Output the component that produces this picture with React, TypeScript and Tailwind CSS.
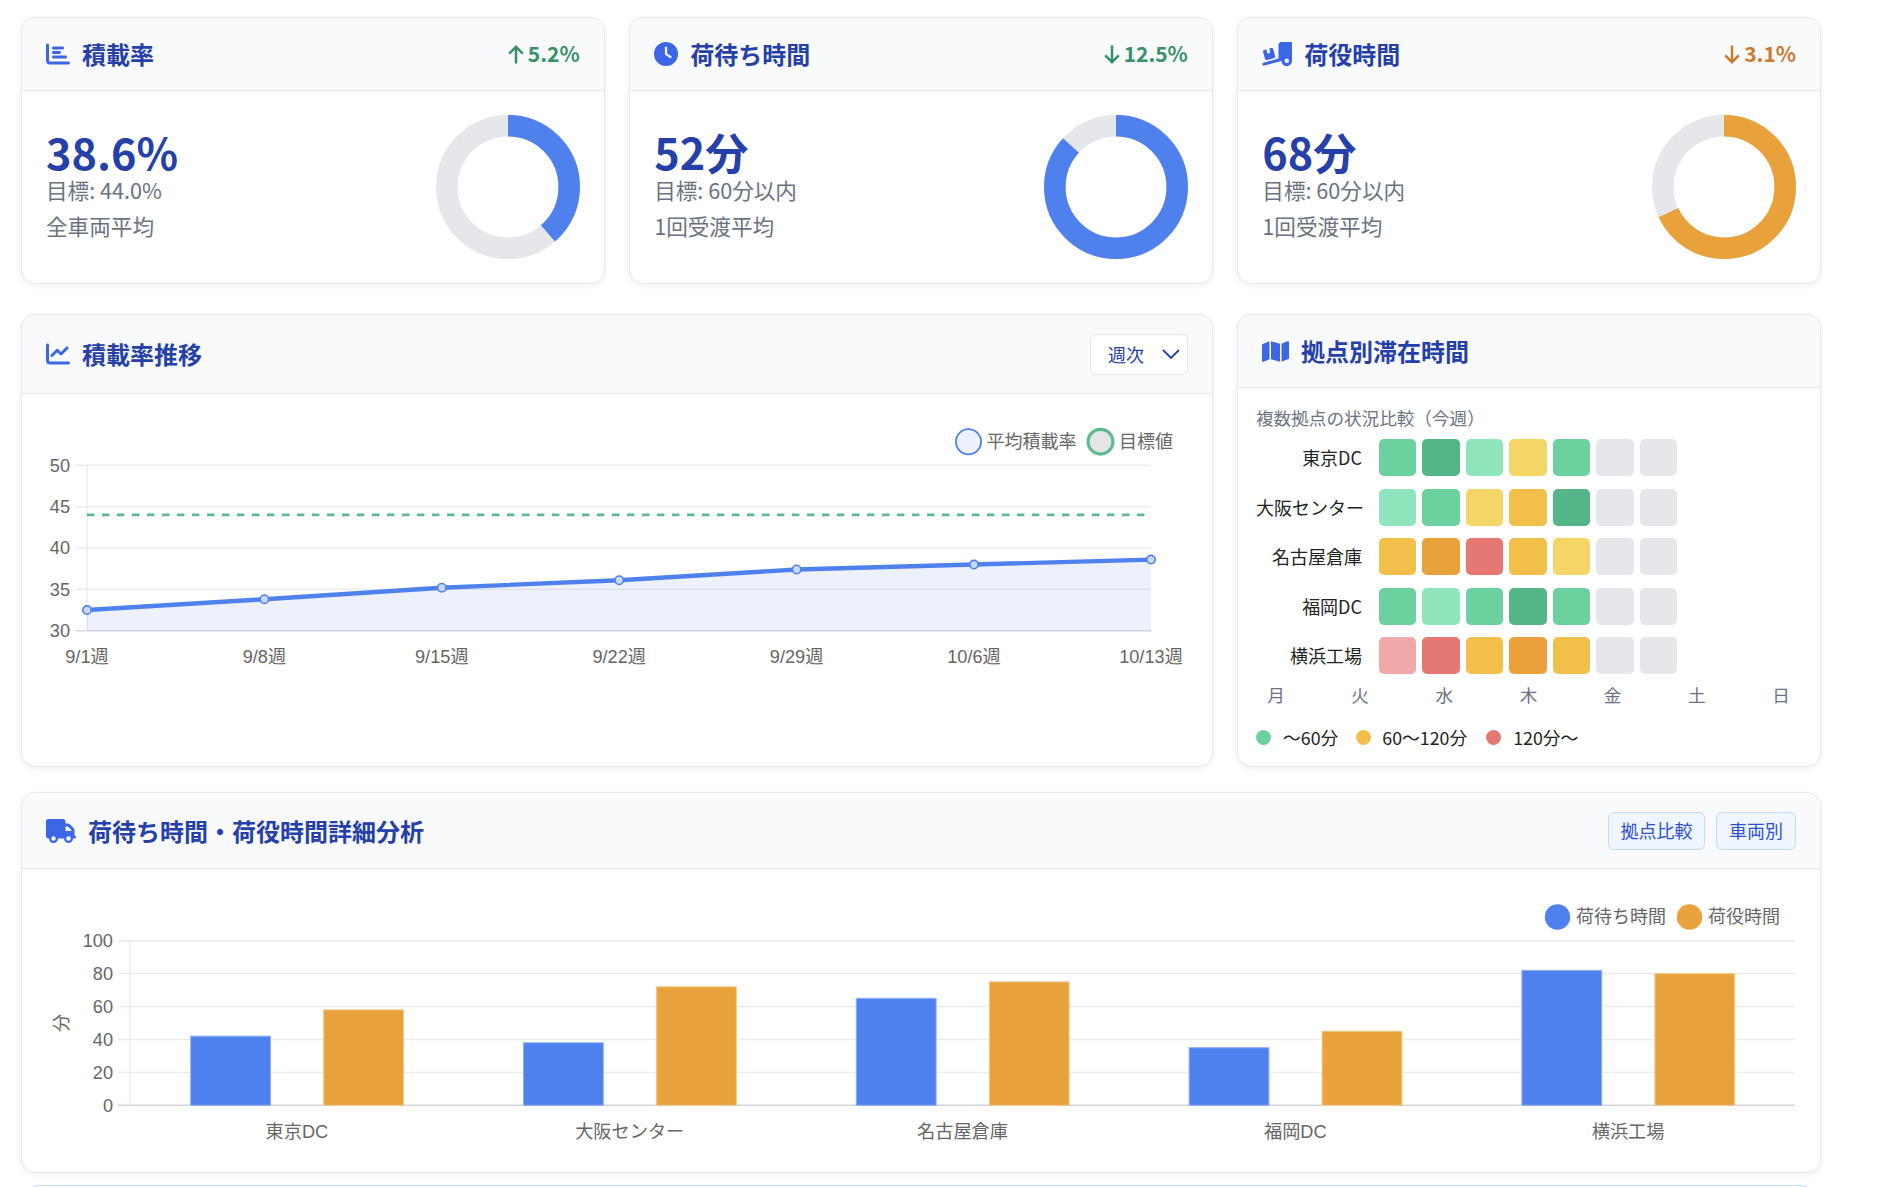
import React from "react";
import { FaChartBar, FaClock, FaTruckRampBox, FaChartLine, FaMap, FaTruck } from "react-icons/fa6";

const BLUE = "#4f81ee";
const ORANGE = "#e8a13b";
const SANS = "Liberation Sans, Noto Sans CJK JP, sans-serif";

function Arrow({ up }: { up: boolean }) {
  return (
    <svg width="16" height="19" viewBox="0 0 16 19" fill="none" stroke="currentColor" strokeWidth="2.5" className="shrink-0">
      {up ? <path d="M8 18.5V2M1.2 8.6 8 1.8l6.8 6.8" /> : <path d="M8 .5V17M1.2 10.4 8 17.2l6.8-6.8" />}
    </svg>
  );
}

function Donut({ pct, color }: { pct: number; color: string }) {
  const r = 61.2;
  const c = 2 * Math.PI * r;
  return (
    <svg width="144" height="144" viewBox="0 0 144 144" className="shrink-0">
      <circle cx="72" cy="72" r={r} fill="none" stroke="#e5e7eb" strokeWidth="21.6" />
      <circle
        cx="72"
        cy="72"
        r={r}
        fill="none"
        stroke={color}
        strokeWidth="21.6"
        strokeDasharray={`${(c * pct) / 100} ${c}`}
        transform="rotate(-90 72 72)"
      />
    </svg>
  );
}

function KpiCard({
  icon,
  title,
  trend,
  trendUp,
  trendColor,
  value,
  target,
  sub,
  pct,
  color,
}: {
  icon: React.ReactNode;
  title: string;
  trend: string;
  trendUp: boolean;
  trendColor: string;
  value: string;
  target: string;
  sub: string;
  pct: number;
  color: string;
}) {
  return (
    <div className="flex-1 h-[267px] bg-white border border-[#e5e7eb] rounded-[14px] shadow-[0_2px_7px_rgba(0,0,0,0.06)] overflow-hidden flex flex-col">
      <div className="h-[73px] shrink-0 px-6 flex items-center justify-between bg-[#f9fafc] border-b border-[#e5e7eb]">
        <div className="flex items-center gap-3 text-[24px] font-bold text-[#2540a8]">
          {icon}
          {title}
        </div>
        <div className="flex items-center gap-[4px] text-[21px] font-semibold" style={{ color: trendColor }}>
          <Arrow up={trendUp} />
          {trend}
        </div>
      </div>
      <div className="flex-1 px-6 flex items-center justify-between">
        <div className="flex flex-col text-[#6b7280] pb-[5.6px]">
          <div className="text-[43.2px] leading-[43px] font-bold text-[#2540a8]">{value}</div>
          <div className="text-[21.6px] leading-[26px] mt-[3.6px]">{target}</div>
          <div className="text-[21.6px] leading-[26px] mt-[10px]">{sub}</div>
        </div>
        <Donut pct={pct} color={color} />
      </div>
    </div>
  );
}

const H2 = "flex items-center gap-3 text-[24px] font-bold text-[#2540a8]";

function LineChart() {
  const xs = [87, 264.4, 441.8, 619.2, 796.6, 974, 1151];
  const vals = [32.5, 33.8, 35.2, 36.1, 37.4, 38, 38.6];
  const labels = ["9/1週", "9/8週", "9/15週", "9/22週", "9/29週", "10/6週", "10/13週"];
  const y = (v: number) => 630.7 - ((v - 30) / 20) * 165.4;
  const off = (v: number) => v - 394;
  const pts = xs.map((x, i) => `${x - 22},${off(y(vals[i]))}`);
  return (
    <svg width="1190" height="372" viewBox="0 0 1190 372" className="block" style={{ fontFamily: SANS }}>
      {[50, 45, 40, 35, 30].map((t) => (
        <g key={t}>
          <line x1="53.5" x2="1129" y1={off(y(t))} y2={off(y(t))} stroke={t === 30 ? "#d4d6db" : "#ebebeb"} strokeWidth="1.4" />
          <text x="48" y={off(y(t)) + 6.4} textAnchor="end" fontSize="18.2" fill="#666">
            {t}
          </text>
        </g>
      ))}
      <line x1="65" x2="65" y1={off(y(50))} y2={off(y(30))} stroke="#ebebeb" strokeWidth="1.4" />
      <polygon points={`65,${off(y(30))} ${pts.join(" ")} 1129,${off(y(30))}`} fill="#4f81ee" fillOpacity="0.11" />
      <line x1="65" x2="1129" y1={off(y(44))} y2={off(y(44))} stroke="#5cbb8d" strokeWidth="2.8" strokeDasharray="7.4 7.6" />
      <polyline points={pts.join(" ")} fill="none" stroke={BLUE} strokeWidth="4.4" />
      {xs.map((x, i) => (
        <circle key={i} cx={x - 22} cy={off(y(vals[i]))} r="4.2" fill="#c9d8f9" stroke={BLUE} strokeWidth="1.6" />
      ))}
      {labels.map((l, i) => (
        <text key={l} x={xs[i] - 22} y="269" textAnchor="middle" fontSize="18.2" fill="#666">
          {l}
        </text>
      ))}
      <circle cx="946.5" cy="47.7" r="12.6" fill="#ecf1fd" stroke={BLUE} strokeWidth="1.8" />
      <text x="964.5" y="54" fontSize="18" fill="#666">平均積載率</text>
      <circle cx="1078.5" cy="47.7" r="12.4" fill="#e5e5e5" stroke="#5cbb8d" strokeWidth="3.2" />
      <text x="1097" y="54" fontSize="18" fill="#666">目標値</text>
    </svg>
  );
}

function BarChart() {
  const blue = [42, 38, 65, 35, 82];
  const orange = [58, 72, 75, 45, 80];
  const labels = ["東京DC", "大阪センター", "名古屋倉庫", "福岡DC", "横浜工場"];
  const y = (v: number) => 1105.3 - v * 1.646 - 869;
  return (
    <svg width="1790" height="303" viewBox="0 0 1790 303" className="block" style={{ fontFamily: SANS }}>
      {[100, 80, 60, 40, 20, 0].map((t) => (
        <g key={t}>
          <line x1="96" x2="1773" y1={y(t)} y2={y(t)} stroke={t === 0 ? "#d4d6db" : "#ebebeb"} strokeWidth="1.4" />
          <text x="91" y={y(t) + 6.4} textAnchor="end" fontSize="18.2" fill="#666">
            {t}
          </text>
        </g>
      ))}
      <line x1="108" x2="108" y1={y(100)} y2={y(0)} stroke="#ebebeb" strokeWidth="1.4" />
      <text x="0" y="0" fontSize="18.2" fill="#666" textAnchor="middle" transform={`translate(46 ${1023 - 869}) rotate(-90)`}>
        分
      </text>
      {labels.map((l, i) => {
        const cx = 108 + 166.5 + i * 332.8;
        return (
          <g key={l}>
            <rect x={cx - 105.8} y={y(blue[i])} width="79.8" height={blue[i] * 1.646} fill={BLUE} stroke="#8fb0f5" strokeWidth="1" />
            <rect x={cx + 27.2} y={y(orange[i])} width="79.8" height={orange[i] * 1.646} fill={ORANGE} stroke="#f3c98d" strokeWidth="1" />
            <text x={cx + 0.4} y="269" textAnchor="middle" fontSize="18.2" fill="#666">
              {l}
            </text>
          </g>
        );
      })}
      <circle cx="1535.5" cy="48" r="12.7" fill={BLUE} />
      <text x="1554" y="54" fontSize="18" fill="#666">荷待ち時間</text>
      <circle cx="1667.5" cy="48" r="12.7" fill={ORANGE} />
      <text x="1686" y="54" fontSize="18" fill="#666">荷役時間</text>
    </svg>
  );
}

const G = "bg-[#6bd19f]";
const D = "bg-[#54b687]";
const L = "bg-[#90e6bc]";
const Y = "bg-[#f5d566]";
const A = "bg-[#f2bf4b]";
const O = "bg-[#e8a13b]";
const R = "bg-[#e57873]";
const P = "bg-[#f0a9a8]";
const N = "bg-[#e5e7eb]";

const heat: [string, string[]][] = [
  ["東京DC", [G, D, L, Y, G, N, N]],
  ["大阪センター", [L, G, Y, A, D, N, N]],
  ["名古屋倉庫", [A, O, R, A, Y, N, N]],
  ["福岡DC", [G, L, G, D, G, N, N]],
  ["横浜工場", [P, R, A, O, A, N, N]],
];

export default function App() {
  return (
    <div
      className="h-[1187px] overflow-hidden bg-white pl-[21px] pt-[17px]"
      style={{ fontFamily: "Noto Sans CJK JP, Noto Sans, sans-serif" }}
    >
      <div className="w-[1800px] flex flex-col">
        <div className="flex gap-[24.5px]">
          <KpiCard icon={<FaChartBar className="text-[#3b66e6] text-[24px]" />} title="積載率" trend="5.2%" trendUp trendColor="#38916a" value="38.6%" target="目標: 44.0%" sub="全車両平均" pct={38.6} color={BLUE} />
          <KpiCard icon={<FaClock className="text-[#3b66e6] text-[24px]" />} title="荷待ち時間" trend="12.5%" trendUp={false} trendColor="#38916a" value="52分" target="目標: 60分以内" sub="1回受渡平均" pct={86.7} color={BLUE} />
          <KpiCard icon={<FaTruckRampBox className="text-[#3b66e6] text-[30px]" />} title="荷役時間" trend="3.1%" trendUp={false} trendColor="#cc7a30" value="68分" target="目標: 60分以内" sub="1回受渡平均" pct={68} color={ORANGE} />
        </div>

        <div className="flex gap-[24.5px] mt-[30px] h-[453px]">
          <div className="w-[1191.5px] bg-white border border-[#e5e7eb] rounded-[14px] shadow-[0_2px_7px_rgba(0,0,0,0.06)] overflow-hidden">
            <div className="h-[79px] px-6 flex items-center justify-between bg-[#f9fafc] border-b border-[#e5e7eb]">
              <div className={H2}>
                <FaChartLine className="text-[#3b66e6] text-[24px]" />
                積載率推移
              </div>
              <div className="w-[98px] h-[41px] bg-white border border-[#e5e7eb] rounded-[6px] flex items-center justify-between pl-[17.5px] pr-[6.5px] text-[18px] text-[#2540a8]">
                週次
                <svg width="18" height="10" viewBox="0 0 18 10" fill="none" stroke="currentColor" strokeWidth="1.8">
                  <path d="M1 1l8 8 8-8" />
                </svg>
              </div>
            </div>
            <LineChart />
          </div>

          <div className="w-[584px] bg-white border border-[#e5e7eb] rounded-[14px] shadow-[0_2px_7px_rgba(0,0,0,0.06)] overflow-hidden">
            <div className="h-[73px] px-6 flex items-center bg-[#f9fafc] border-b border-[#e5e7eb]">
              <div className={H2}>
                <FaMap className="text-[#3b66e6] text-[27px]" />
                拠点別滞在時間
              </div>
            </div>
            <div className="pl-[18px] pr-[19px] pt-[17px]">
              <div className="text-[17.6px] leading-[26px] text-[#6b7280]">複数拠点の状況比較（今週）</div>
              <div className="flex flex-col gap-[12.5px] mt-[8.4px]">
                {heat.map(([name, cells]) => (
                  <div key={name} className="flex items-center h-[37px]">
                    <div className="w-[106px] text-right text-[18px] text-[#222] whitespace-nowrap">{name}</div>
                    <div className="ml-[16.5px] flex gap-[6px]">
                      {cells.map((c, i) => (
                        <div key={i} className={`w-[37.5px] h-[37px] rounded-[5px] ${c}`} />
                      ))}
                    </div>
                  </div>
                ))}
              </div>
              <div className="flex justify-between mt-[7.6px] text-[17.6px] text-[#6b7280]">
                {["月", "火", "水", "木", "金", "土", "日"].map((d) => (
                  <div key={d} className="w-[40px] text-center">{d}</div>
                ))}
              </div>
              <div className="flex items-center mt-[16px] text-[17.8px] text-[#222]">
                <span className="w-[15px] h-[15px] rounded-full bg-[#6bd19f]" />
                <span className="ml-[12px]">～60分</span>
                <span className="ml-[18px] w-[15px] h-[15px] rounded-full bg-[#f2bf4b]" />
                <span className="ml-[11px]">60～120分</span>
                <span className="ml-[19px] w-[15px] h-[15px] rounded-full bg-[#e57873]" />
                <span className="ml-[12px]">120分～</span>
              </div>
            </div>
          </div>
        </div>

        <div className="mt-[25px] h-[381px] bg-white border border-[#e5e7eb] rounded-[14px] shadow-[0_2px_7px_rgba(0,0,0,0.06)] overflow-hidden">
          <div className="h-[76px] px-6 flex items-center justify-between bg-[#f9fafc] border-b border-[#e5e7eb]">
            <div className={H2}>
              <FaTruck className="text-[#3b66e6] text-[30px]" />
              荷待ち時間・荷役時間詳細分析
            </div>
            <div className="flex gap-[11px] text-[18px] text-[#2c50cf]">
              <div className="h-[38px] w-[97px] flex items-center justify-center bg-[#eff6ff] border border-[#bfdbfe] rounded-[6px]">拠点比較</div>
              <div className="h-[38px] w-[80px] flex items-center justify-center bg-[#eff6ff] border border-[#bfdbfe] rounded-[6px]">車両別</div>
            </div>
          </div>
          <BarChart />
        </div>

        <div className="mt-[12px] ml-[5px] mr-[6px] h-[60px] bg-white border border-[#bfdbfe] rounded-[14px]" />
      </div>
    </div>
  );
}
